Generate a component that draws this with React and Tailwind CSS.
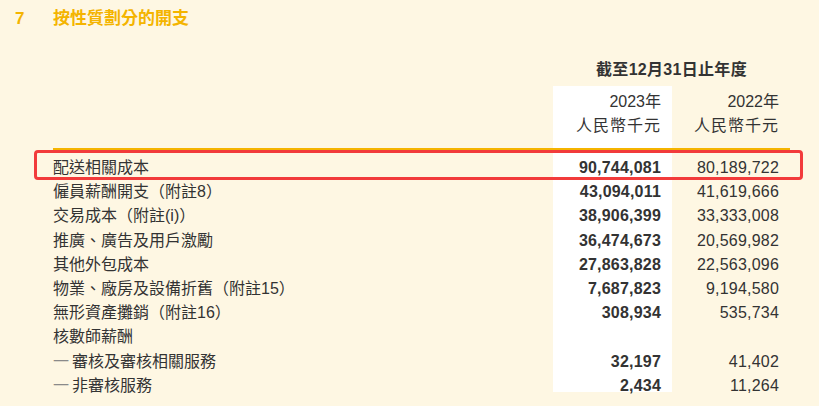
import React from 'react';

const rows = [
  { label: '配送相關成本', a: '90,744,081', b: '80,189,722' },
  { label: '僱員薪酬開支（附註8）', a: '43,094,011', b: '41,619,666' },
  { label: '交易成本（附註(i)）', a: '38,906,399', b: '33,333,008' },
  { label: '推廣、廣告及用戶激勵', a: '36,474,673', b: '20,569,982' },
  { label: '其他外包成本', a: '27,863,828', b: '22,563,096' },
  { label: '物業、廠房及設備折舊（附註15）', a: '7,687,823', b: '9,194,580' },
  { label: '無形資產攤銷（附註16）', a: '308,934', b: '535,734' },
  { label: '核數師薪酬', a: '', b: '' },
  { label: '審核及審核相關服務', a: '32,197', b: '41,402', sub: true },
  { label: '非審核服務', a: '2,434', b: '11,264', sub: true },
];

export default function App() {
  return (
    <div
      className="w-[819px] h-[406px] overflow-hidden bg-[#fef7e3] text-[#333333]"
      style={{ fontFamily: '"Liberation Sans", "Noto Sans CJK TC", sans-serif' }}
    >
      {/* title */}
      <div className="flex items-center h-[38px] text-[17px] font-bold text-[#f4b400]">
        <span className="w-[53px] pl-[15px]">7</span>
        <span>按性質劃分的開支</span>
      </div>

      <div className="pl-[53px] pr-[29px]">
        {/* period header */}
        <div className="flex h-[48px] items-end pb-[4px]">
          <div className="flex-1" />
          <div className="w-[237px] text-center text-[16px] font-bold tracking-[0.3px]">截至12月31日止年度</div>
        </div>

        {/* year / currency header */}
        <div className="flex border-b-2 border-[#f5b400] text-[16px]">
          <div className="flex-1" />
          <div className="w-[119px] bg-white pr-[11px] pt-[4px] pb-[10px] text-right leading-[24px]">
            <div>2023年</div>
            <div className="tracking-[1px]">人民幣千元</div>
          </div>
          <div className="w-[118px] pr-[11px] pt-[4px] pb-[10px] text-right leading-[24px]">
            <div>2022年</div>
            <div className="tracking-[1px]">人民幣千元</div>
          </div>
        </div>

        {/* data rows */}
        <div className="relative">
          <div className="absolute left-[-19px] right-[-13px] top-[0px] h-[30px] rounded-[4px] border-[3px] border-[#f23b3b] pointer-events-none" />
          {rows.map((r, i) => {
            const first = i === 0;
            const last = i === rows.length - 1;
            const rowCls = first ? 'pt-[6px]' : last ? 'h-[18.2px]' : '';
            return (
              <div key={i} className={`flex text-[16px] leading-[24.2px] ${last ? 'h-[18.2px]' : ''}`}>
                <div className={`flex-1 flex items-start whitespace-nowrap ${rowCls}`}>
                  {r.sub && <span className="text-[#8a8a8a] w-[19px]">一</span>}
                  <span>{r.label}</span>
                </div>
                <div className={`w-[119px] bg-white pr-[11px] text-right font-bold tracking-[0.2px] ${rowCls}`}>{r.a}</div>
                <div className={`w-[118px] pr-[11px] text-right tracking-[0.2px] ${rowCls}`}>{r.b}</div>
              </div>
            );
          })}
        </div>
      </div>
    </div>
  );
}
